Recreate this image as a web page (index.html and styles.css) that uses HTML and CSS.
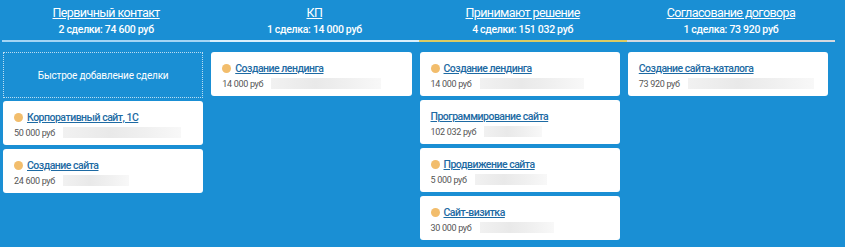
FILE: index.html
```html
<html>
<head>
    <title>Сделки</title>
    <link rel="stylesheet" href="styles.css">
</head>
<body>
    <div id="board">
        <div class="column">
            <div class="col-head line-blue">
                <a class="col-title" href="#">Первичный контакт</a>
                <div class="col-sum">2 сделки: 74 600 руб</div>
            </div>
            <div class="col-body">
                <div class="quick-add">Быстрое добавление сделки</div>
                <div class="card">
                    <div class="card-title"><span class="dot"></span><a href="#">Корпоративный сайт, 1С</a></div>
                    <div class="card-info">50 000 руб <span class="hidden-name" style="width: 118px"></span></div>
                </div>
                <div class="card">
                    <div class="card-title"><span class="dot"></span><a href="#">Создание сайта</a></div>
                    <div class="card-info">24 600 руб <span class="hidden-name" style="width: 66px"></span></div>
                </div>
            </div>
        </div>

        <div class="column">
            <div class="col-head line-white">
                <a class="col-title" href="#">КП</a>
                <div class="col-sum">1 сделка: 14 000 руб</div>
            </div>
            <div class="col-body">
                <div class="card">
                    <div class="card-title"><span class="dot"></span><a href="#">Создание лендинга</a></div>
                    <div class="card-info">14 000 руб <span class="hidden-name" style="width: 110px"></span></div>
                </div>
            </div>
        </div>

        <div class="column">
            <div class="col-head line-yellow">
                <a class="col-title" href="#">Принимают решение</a>
                <div class="col-sum">4 сделки: 151 032 руб</div>
            </div>
            <div class="col-body">
                <div class="card">
                    <div class="card-title"><span class="dot"></span><a href="#">Создание лендинга</a></div>
                    <div class="card-info">14 000 руб <span class="hidden-name" style="width: 104px"></span></div>
                </div>
                <div class="card">
                    <div class="card-title"><a href="#">Программирование сайта</a></div>
                    <div class="card-info">102 032 руб <span class="hidden-name" style="width: 58px"></span></div>
                </div>
                <div class="card">
                    <div class="card-title"><span class="dot"></span><a href="#">Продвижение сайта</a></div>
                    <div class="card-info">5 000 руб <span class="hidden-name" style="width: 72px"></span></div>
                </div>
                <div class="card">
                    <div class="card-title"><span class="dot"></span><a href="#">Сайт-визитка</a></div>
                    <div class="card-info">30 000 руб <span class="hidden-name" style="width: 74px"></span></div>
                </div>
            </div>
        </div>

        <div class="column">
            <div class="col-head line-grey">
                <a class="col-title" href="#">Согласование договора</a>
                <div class="col-sum">1 сделка: 73 920 руб</div>
            </div>
            <div class="col-body">
                <div class="card">
                    <div class="card-title"><a href="#">Создание сайта-каталога</a></div>
                    <div class="card-info">73 920 руб <span class="hidden-name" style="width: 126px"></span></div>
                </div>
            </div>
        </div>
    </div>
</body>
</html>
```

FILE: styles.css
```css
body {
    margin: 0;
    background-color: #1a8fd4;
    font-family: Roboto, "Liberation Sans", sans-serif;
}

#board {
    display: flex;
    padding: 0 10px 0 2px;
}

.column {
    flex: 1;
    min-width: 0;
}

.col-head {
    height: 40px;
    text-align: center;
    color: white;
    border-bottom: 2px solid white;
}

.line-blue { border-bottom-color: #a4d5f4; }
.line-white { border-bottom-color: #dcf0fc; }
.line-yellow { border-bottom-color: #dccb62; }
.line-grey { border-bottom-color: #d4d9e0; }

.col-title {
    display: inline-block;
    margin-top: 4px;
    color: white;
    font-size: 12.5px;
    letter-spacing: -0.6px;
    line-height: 17px;
}

.col-sum {
    margin-top: 2px;
    font-size: 10.5px;
    font-weight: 500;
    letter-spacing: -0.3px;
    line-height: 14px;
}

.col-body {
    padding: 10px 7px 0 1px;
}

.quick-add {
    height: 44px;
    border: 1px dotted rgba(255, 255, 255, 0.7);
    color: white;
    font-size: 10px;
    letter-spacing: -0.2px;
    display: flex;
    align-items: center;
    justify-content: center;
    margin-bottom: 3px;
}

.card {
    height: 44px;
    box-sizing: border-box;
    background-color: white;
    border-radius: 3px;
    padding: 9px 10px 0 11px;
    margin-bottom: 4px;
}

.card-title {
    display: flex;
    align-items: center;
    height: 15px;
    font-size: 10.5px;
    font-weight: 500;
    letter-spacing: -0.5px;
}

.card-title a {
    color: #1d6aa3;
}

.dot {
    width: 9px;
    height: 9px;
    border-radius: 50%;
    background-color: #f2bd6c;
    margin-right: 4px;
}

.card-info {
    display: flex;
    align-items: center;
    margin-top: 2px;
    font-size: 9px;
    letter-spacing: -0.3px;
    color: #555;
    white-space: nowrap;
}

.hidden-name {
    display: inline-block;
    height: 11px;
    margin-left: 8px;
    background: linear-gradient(90deg, #f1f1f1, #e9e9e9 40%, #f0f0f0 70%, #f8f8f8);
}
```
